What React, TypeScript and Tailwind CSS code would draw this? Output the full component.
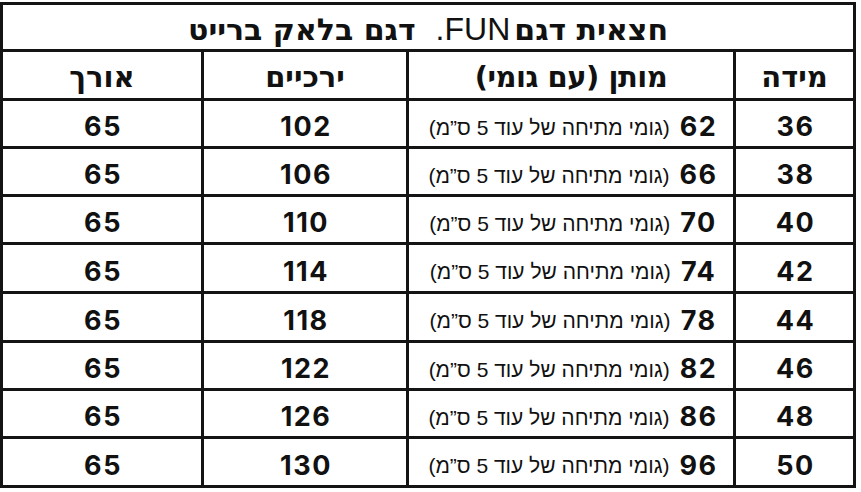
import React from "react";

const heb = { fontFamily: '"DejaVu Sans", "Liberation Sans", sans-serif' };
const num = { fontFamily: 'Inter, "Liberation Sans", sans-serif', letterSpacing: "1.5px" };

const rows: [string, string, string, string, string][] = [
  ["65", "102", "62", "36", "h-[48px]"],
  ["65", "106", "66", "38", "h-[48px]"],
  ["65", "110", "70", "40", "h-[48px]"],
  ["65", "114", "74", "42", "h-[49px]"],
  ["65", "118", "78", "44", "h-[49px]"],
  ["65", "122", "82", "46", "h-[48px]"],
  ["65", "126", "86", "48", "h-[48px]"],
  ["65", "130", "96", "50", "h-[49px]"],
];

export default function App() {
  return (
    <div className="w-[861px] h-[492px] bg-white pt-[2px]">
      <div className="w-[856px] border-[3px] border-[#141414] text-[#111]">
        <div
          dir="rtl"
          className="h-[44px] flex items-center justify-center text-[30px] font-bold pt-[4px]"
          style={heb}
        >
          <span>חצאית דגם </span>
          <span className="font-normal mx-[4px]" style={{ fontFamily: '"Liberation Sans", sans-serif', fontSize: 32 }}>
            FUN.
          </span>
          <span className="mr-[16px]">דגם בלאק ברייט</span>
        </div>
        <div className="flex h-[49px] border-t-[3px] border-[#141414] text-[29px] font-bold" style={heb} dir="ltr">
          <div dir="rtl" className="w-[198px] flex items-center justify-center pt-[5px]">אורך</div>
          <div dir="rtl" className="w-[205px] border-l-[3px] border-[#141414] flex items-center justify-center pt-[5px]">ירכיים</div>
          <div dir="rtl" className="w-[327px] border-l-[3px] border-[#141414] flex items-center justify-center pt-[5px] tracking-[-0.5px]">מותן (עם גומי)</div>
          <div dir="rtl" className="w-[120px] border-l-[3px] border-[#141414] flex items-center justify-center pt-[5px]">מידה</div>
        </div>
        {rows.map(([a, b, c, d, h], i) => (
          <div key={i} className={`flex ${h} border-t-[3px] border-[#141414]`} dir="ltr">
            <div className="w-[198px] flex items-center justify-center text-[27px] font-bold pt-[8px] pl-[2px]" style={num}>{a}</div>
            <div className="w-[205px] border-l-[3px] border-[#141414] flex items-center justify-center text-[27px] font-bold pt-[8px] pl-[2px]" style={num}>{b}</div>
            <div dir="rtl" className="w-[327px] border-l-[3px] border-[#141414] flex items-center justify-center pt-[8px] pl-[4px]">
              <span className="text-[27px] font-bold ml-[10px]" style={num}>{c}</span>
              <span className="text-[21px]" style={{ fontFamily: '"Liberation Sans", sans-serif' }}>(גומי מתיחה של עוד 5 ס”מ)</span>
            </div>
            <div className="w-[120px] border-l-[3px] border-[#141414] flex items-center justify-center text-[27px] font-bold pt-[8px] pl-[2px]" style={num}>{d}</div>
          </div>
        ))}
      </div>
    </div>
  );
}
